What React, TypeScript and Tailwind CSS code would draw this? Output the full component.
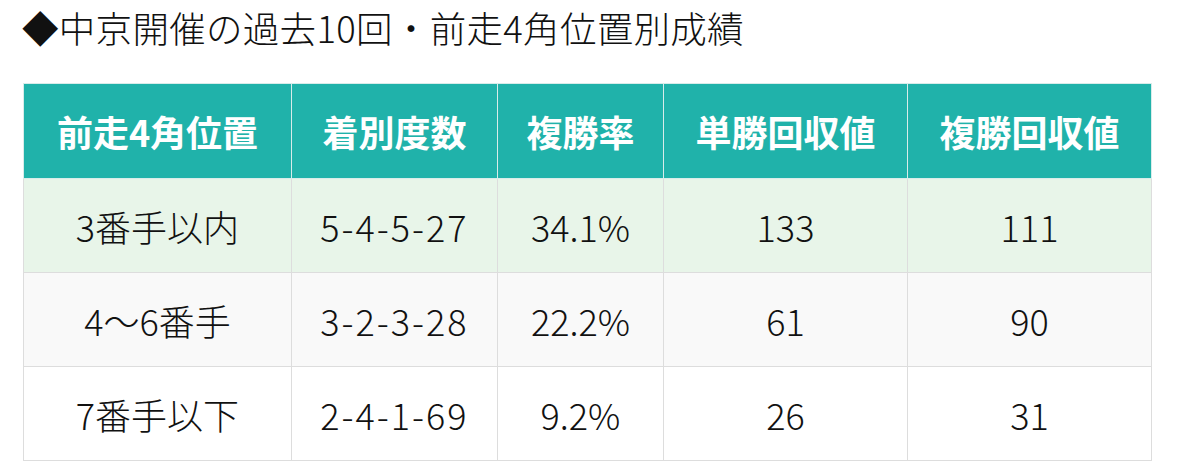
const headers = ["前走4角位置", "着別度数", "複勝率", "単勝回収値", "複勝回収値"];

const rows = [
  { cells: ["3番手以内", "5-4-5-27", "34.1%", "133", "111"], bg: "bg-[#e8f5e9]" },
  { cells: ["4〜6番手", "3-2-3-28", "22.2%", "61", "90"], bg: "bg-[#f9f9f9]" },
  { cells: ["7番手以下", "2-4-1-69", "9.2%", "26", "31"], bg: "bg-white" },
];

const widths = ["w-[268px]", "w-[206px]", "w-[166px]", "w-[244px]", "w-[244px]"];

export default function App() {
  return (
    <div className="min-h-screen bg-white font-['Noto_Sans_CJK_JP',sans-serif] text-[#111]">
      <div className="pl-[22px]">
        <h2 className="text-[36.5px] leading-[56px] font-light tracking-[0.3px]">◆中京開催の過去10回・前走4角位置別成績</h2>
      </div>
      <div className="pl-[23px] pt-[27px]">
        <table className="border-collapse table-fixed w-[1128px]">
          <thead>
            <tr>
              {headers.map((h, i) => (
                <th
                  key={h}
                  className={`${widths[i]} h-[95px] bg-[#20b2aa] text-white text-[36px] font-bold text-center border border-[#d8ecea]`}
                >
                  {h}
                </th>
              ))}
            </tr>
          </thead>
          <tbody>
            {rows.map((r) => (
              <tr key={r.cells[0]} className={r.bg}>
                {r.cells.map((c, i) => (
                  <td
                    key={i}
                    className={`h-[94px] text-center text-[36px] font-light border border-[#dddddd] ${i === 1 ? "tracking-[2px]" : ""}`}
                  >
                    {c}
                  </td>
                ))}
              </tr>
            ))}
          </tbody>
        </table>
      </div>
    </div>
  );
}
